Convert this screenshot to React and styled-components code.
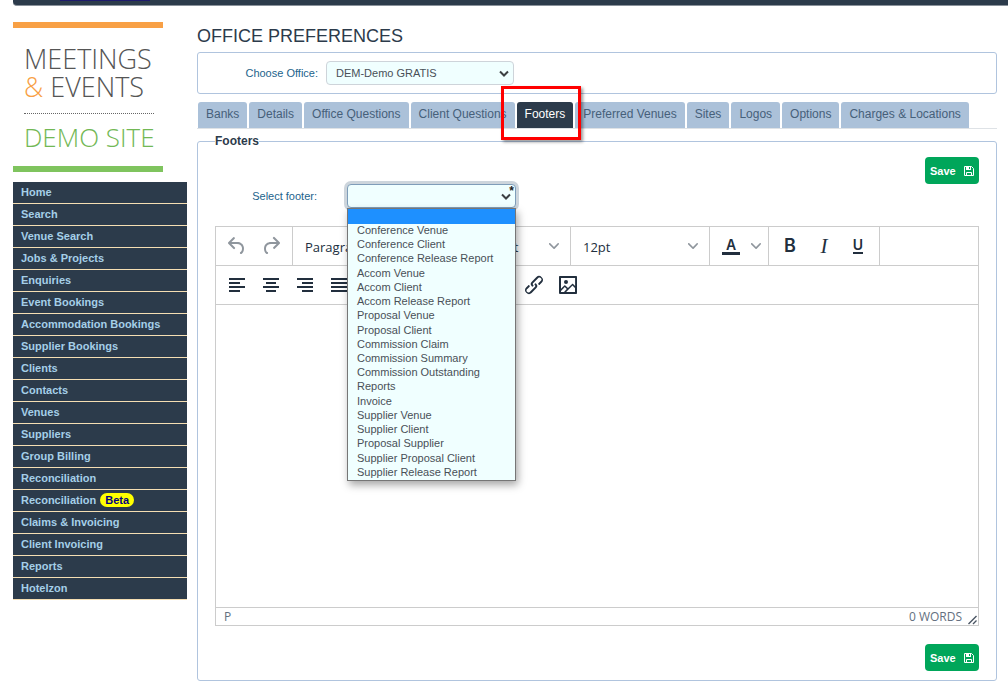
import React from "react";
import styled, { createGlobalStyle } from "styled-components";

const navy = "#2c3b4b";
const steel = "#b0c4de";
const editorLine = "#cccccc";
const editorInk = "#222f3e";

const GlobalStyle = createGlobalStyle`
    * {
        box-sizing: border-box;
    }
    body {
        margin: 0;
        background-color: #fff;
        color: ${navy};
        font-family: "Liberation Sans", Arial, sans-serif;
        font-size: 11px;
    }
    button, select, textarea {
        font-family: inherit;
    }
`

const TopBar = styled.header`
    height: 6px;
    margin-left: 13px;
    padding-left: 47px;
    background-color: ${navy};
    border-bottom: 1px solid #8a929b;
    border-bottom-left-radius: 4px;
`

const TopBarLine = styled.div`
    width: 90px;
    height: 1px;
    background-color: #1d1a6b;
`

const Page = styled.div`
    display: flex;
    align-items: flex-start;
    gap: 10px;
    padding: 16px 11px 12px 13px;
`

const SideBar = styled.aside`
    flex: 0 0 174px;
`

const LogoCamp = styled.div`
    display: flex;
    flex-direction: column;
    width: 150px;
    height: 150px;
    padding: 17px 9px 0 11px;
    margin-bottom: 10px;
    border-top: 6px solid #f8a045;
    border-bottom: 6px solid #7fc45e;
    font-family: "Open Sans", sans-serif;
    font-size: 27px;
    font-weight: 300;
    line-height: 28px;
    color: #555;
    white-space: nowrap;
`

const Ampersand = styled.span`
    color: #f8a045;
`

const LogoSite = styled.div`
    margin-top: 12px;
    padding-top: 9px;
    border-top: 1px dotted #666;
    font-size: 26px;
    color: #72b855;
`

const Menu = styled.nav`
    display: flex;
    flex-direction: column;
`

const MenuLink = styled.a`
    display: flex;
    align-items: center;
    gap: 4px;
    height: 22px;
    padding: 0 8px 1px;
    border-bottom: 1px solid #f5deb3;
    background-color: ${navy};
    color: #a5cfe8;
    font-weight: bold;
    text-decoration: none;
`

const Beta = styled.span`
    padding: 0 5px;
    border-radius: 7px;
    background-color: #ff0;
    color: #000080;
    line-height: 14px;
`

const Main = styled.main`
    flex: 1;
    min-width: 0;
`

const Title = styled.h1`
    margin: 4px 0 5px;
    font-size: 18px;
    font-weight: normal;
    line-height: 21px;
`

const OfficeBox = styled.div`
    display: flex;
    align-items: center;
    gap: 8px;
    height: 42px;
    border: 1px solid ${steel};
    border-radius: 3px;
`

const Label = styled.label`
    width: ${(props) => props.$width}px;
    color: #22638c;
    text-align: right;
`

const SelectCamp = styled.div`
    position: relative;
    width: ${(props) => props.$width}px;
`

const Select = styled.select`
    display: block;
    appearance: none;
    width: 100%;
    height: 24px;
    padding: 0 9px;
    border: 1px solid ${(props) => (props.$open ? "#7f9db9" : "#ced4da")};
    border-radius: 4px;
    outline: none;
    background-color: #f0ffff;
    box-shadow: ${(props) => (props.$open ? "0 0 0 3px #cdd5dc" : "none")};
    color: #495057;
    font-size: 11px;
`

const SelectArrow = styled.svg`
    position: absolute;
    right: 5px;
    top: 9px;
    pointer-events: none;
`

const Required = styled.span`
    position: absolute;
    right: 2px;
    top: 1px;
    color: #222;
    font-size: 12px;
    font-weight: bold;
    line-height: 12px;
`

const Options = styled.ul`
    position: absolute;
    z-index: 2;
    top: 24px;
    left: 0;
    right: 0;
    display: grid;
    grid-template-rows: 15px repeat(18, 1fr);
    height: 273px;
    margin: 0;
    padding: 0;
    border: 1px solid #767676;
    background-color: #f0ffff;
    box-shadow: 2px 4px 8px rgba(0, 0, 0, 0.35);
    color: #495057;
    list-style: none;
`

const Option = styled.li`
    padding-left: 9px;
    line-height: 12px;
    background-color: ${(props) => (props.$active ? "#1e90ff" : "transparent")};
`

const Tabs = styled.div`
    display: flex;
    gap: 2px;
    margin-top: 8px;
    padding-left: 1px;
    border-bottom: 1px solid #dee2e6;
`

const Tab = styled.button`
    position: relative;
    height: 26px;
    padding: 0 8px 2px;
    border: 0;
    border-radius: 3px 3px 0 0;
    background-color: ${(props) => (props.$active ? navy : "#abc1d9")};
    color: ${(props) => (props.$active ? "#fff" : "#46607a")};
    font-size: 12px;
    white-space: nowrap;
`

const Highlight = styled.span`
    position: absolute;
    z-index: 1;
    inset: -16px -8px -12px -16px;
    border: 3px solid #f00;
    box-shadow: 2px 2px 3px rgba(0, 0, 0, 0.4);
`

const Panel = styled.fieldset`
    min-width: 0;
    margin: 4px 0 0;
    padding: 8px 17px 9px;
    border: 1px solid ${steel};
    border-radius: 3px;
`

const PanelTitle = styled.legend`
    padding: 0;
    font-size: 12px;
    font-weight: bold;
    line-height: 16px;
`

const ButtonRow = styled.div`
    display: flex;
    justify-content: flex-end;
`

const SaveButton = styled.button`
    display: flex;
    align-items: center;
    justify-content: space-between;
    width: 54px;
    height: 27px;
    padding: 0 5px;
    border: 0;
    border-radius: 4px;
    background-color: #00a65a;
    color: #fff;
    font-size: 11px;
    font-weight: bold;
`

const FooterRow = styled.div`
    display: flex;
    align-items: center;
    gap: 30px;
    margin-bottom: 18px;
`

const Editor = styled.div`
    margin-bottom: 18px;
    border: 1px solid ${editorLine};
    color: ${editorInk};
    font-family: "Open Sans", "Noto Sans", sans-serif;
`

const ToolRow = styled.div`
    display: flex;
    height: 39px;
    border-bottom: 1px solid ${editorLine};
`

const ToolGroup = styled.div`
    display: flex;
    align-items: center;
    padding: 0 ${(props) => (props.$picker ? 8 : 4)}px 0 4px;
    width: ${(props) => (props.$width ? `${props.$width}px` : "auto")};
    border-right: 1px solid ${(props) => (props.$last ? "transparent" : editorLine)};
`

const ToolButton = styled.button`
    display: flex;
    align-items: center;
    justify-content: center;
    width: ${(props) => (props.$narrow ? 16 : 34)}px;
    height: 34px;
    padding: 0;
    border: 0;
    background: none;
    color: ${editorInk};
    opacity: ${(props) => (props.$faded ? 0.5 : 1)};
`

const ToolSelect = styled.select`
    appearance: none;
    flex: 1;
    min-width: 0;
    height: 34px;
    padding: 1px 8px 0;
    border: 0;
    background: none;
    color: ${editorInk};
    font-size: 13px;
`

const Letter = styled.span`
    font-family: ${(props) => (props.$italic ? '"Liberation Serif", serif' : 'Inter, sans-serif')};
    font-size: ${(props) => props.$size}px;
    font-style: ${(props) => (props.$italic ? "italic" : "normal")};
    font-weight: ${(props) => (props.$italic ? "normal" : "600")};
    line-height: ${(props) => (props.$line ? "14px" : "20px")};
    padding: 0 ${(props) => (props.$line === 3 ? 4 : 0)}px;
    border-bottom: ${(props) => props.$line || 0}px solid ${editorInk};
`

const TextArea = styled.textarea`
    display: block;
    width: 100%;
    height: 302px;
    padding: 10px;
    border: 0;
    resize: none;
    outline: none;
`

const StatusBar = styled.div`
    display: flex;
    align-items: flex-end;
    height: 18px;
    padding: 0 1px 0 8px;
    border-top: 1px solid ${editorLine};
    color: #647080;
    font-size: 12px;
    line-height: 17px;
`

const WordCount = styled.span`
    margin-left: auto;
    margin-right: 6px;
`

const Icon = ({ path }) => (
    <svg width="24" height="24" viewBox="0 0 24 24" fill="currentColor" fillRule="evenodd">
        <path d={path} />
    </svg>
);

const Chevron = () => (
    <svg width="10" height="10" viewBox="0 0 10 10" fill={editorInk} opacity="0.5">
        <path d="M8.7 2.2c.3-.3.8-.3 1 0 .4.4.4.9 0 1.2L5.7 7.8c-.3.3-.9.3-1.2 0L.2 3.4a.8.8 0 0 1 0-1.2c.3-.3.8-.3 1.1 0L5 6l3.7-3.8z" />
    </svg>
);

const Arrow = () => (
    <SelectArrow width="10" height="8" viewBox="0 0 10 8" fill="none" stroke="#3c4043" strokeWidth="2">
        <path d="M1 1.5 5 5.5 9 1.5" />
    </SelectArrow>
);

const icons = {
    undo: "M6.4 8H12c3.7 0 6.2 2 6.8 5.1.6 2.7-.4 5.6-2.3 6.8a1 1 0 0 1-1-1.8c1.1-.6 1.8-2.7 1.4-4.6-.5-2.1-2.1-3.5-4.9-3.5H6.4l3.3 3.3a1 1 0 1 1-1.4 1.4l-5-5a1 1 0 0 1 0-1.4l5-5a1 1 0 0 1 1.4 1.4L6.4 8z",
    redo: "M17.6 10H12c-2.8 0-4.4 1.4-4.9 3.5-.4 2 .3 4 1.4 4.6a1 1 0 1 1-1 1.8c-2-1.2-2.9-4.1-2.3-6.8.6-3 3-5.1 6.8-5.1h5.6l-3.3-3.3a1 1 0 1 1 1.4-1.4l5 5a1 1 0 0 1 0 1.4l-5 5a1 1 0 0 1-1.4-1.4l3.3-3.3z",
    left: "M4 5h16v2H4zM4 9h11v2H4zM4 13h16v2H4zM4 17h11v2H4z",
    center: "M4 5h16v2H4zM7 9h10v2H7zM4 13h16v2H4zM7 17h10v2H7z",
    right: "M4 5h16v2H4zM9 9h11v2H9zM4 13h16v2H4zM9 17h11v2H9z",
    justify: "M4 5h16v2H4zM4 9h16v2H4zM4 13h16v2H4zM4 17h16v2H4z",
    link: "M6.2 12.3a1 1 0 0 1 1.4 1.4l-2 2a2 2 0 1 0 2.6 2.8l4.8-4.8a1 1 0 0 0 0-1.4 1 1 0 1 1 1.4-1.3 2.9 2.9 0 0 1 0 4L9.6 20a3.9 3.9 0 0 1-5.5-5.5l2-2zm11.6-.6a1 1 0 0 1-1.4-1.4l2-2a2 2 0 1 0-2.6-2.8L11 10.3a1 1 0 0 0 0 1.4A1 1 0 1 1 9.6 13a2.9 2.9 0 0 1 0-4L14.4 4a3.9 3.9 0 0 1 5.5 5.5l-2 2z",
    image: "m5 15.7 3.3-3.2c.3-.3.7-.3 1 0L12 15l4.1-4c.3-.4.8-.4 1 0l2 1.9V5H5v10.7zM5 18V19h3l2.8-2.9-2-2L5 17.9zm14-3-2.5-2.4-6.4 6.5H19v-4zM4 3h16c.6 0 1 .4 1 1v16c0 .6-.4 1-1 1H4a1 1 0 0 1-1-1V4c0-.6.4-1 1-1zm6 8a2 2 0 1 0 0-4 2 2 0 0 0 0 4z",
};

const menu = [
    "Home", "Search", "Venue Search", "Jobs & Projects", "Enquiries", "Event Bookings",
    "Accommodation Bookings", "Supplier Bookings", "Clients", "Contacts", "Venues", "Suppliers",
    "Group Billing", "Reconciliation", "Reconciliation Beta", "Claims & Invoicing",
    "Client Invoicing", "Reports", "Hotelzon",
];

const tabs = [
    "Banks", "Details", "Office Questions", "Client Questions", "Footers",
    "Preferred Venues", "Sites", "Logos", "Options", "Charges & Locations",
];

const footers = [
    "Conference Venue", "Conference Client", "Conference Release Report", "Accom Venue",
    "Accom Client", "Accom Release Report", "Proposal Venue", "Proposal Client",
    "Commission Claim", "Commission Summary", "Commission Outstanding", "Reports", "Invoice",
    "Supplier Venue", "Supplier Client", "Proposal Supplier", "Supplier Proposal Client",
    "Supplier Release Report",
];

const Save = () => (
    <ButtonRow>
        <SaveButton type="button">
            Save
            <svg width="10" height="10" viewBox="0 0 10 10" fill="none" stroke="#fff">
                <path d="M.5.5H7.5L9.5 2.5V9.5H.5zM2.5 9.5V6.5H7.5V9.5" />
                <path d="M2 0h5v4H2z" fill="#fff" stroke="none" />
                <path d="M5 1h1v2H5z" fill="#00a65a" stroke="none" />
            </svg>
        </SaveButton>
    </ButtonRow>
);

const Tool = ({ name, faded }) => (
    <ToolButton type="button" aria-label={name} $faded={faded}>
        <Icon path={icons[name]} />
    </ToolButton>
);

const ToolPicker = ({ label, value }) => (
    <ToolGroup $width={139} $picker>
        <ToolSelect aria-label={label}>
            <option>{value}</option>
        </ToolSelect>
        <ToolButton as="span" $narrow>
            <Chevron />
        </ToolButton>
    </ToolGroup>
);

const App = () => {
    return (
        <>
            <GlobalStyle />
            <TopBar>
                <TopBarLine />
            </TopBar>
            <Page>
                <SideBar>
                    <LogoCamp>
                        <div>MEETINGS</div>
                        <div><Ampersand>&amp;</Ampersand> EVENTS</div>
                        <LogoSite>DEMO SITE</LogoSite>
                    </LogoCamp>
                    <Menu>
                        {menu.map((item) => (
                            <MenuLink href="#" key={item}>
                                {item.replace(" Beta", "")}
                                {item.endsWith("Beta") && <Beta>Beta</Beta>}
                            </MenuLink>
                        ))}
                    </Menu>
                </SideBar>
                <Main>
                    <Title>OFFICE PREFERENCES</Title>
                    <OfficeBox>
                        <Label htmlFor="office" $width={120}>Choose Office:</Label>
                        <SelectCamp $width={188}>
                            <Select id="office">
                                <option>DEM-Demo GRATIS</option>
                            </Select>
                            <Arrow />
                        </SelectCamp>
                    </OfficeBox>
                    <Tabs role="tablist">
                        {tabs.map((tab) => (
                            <Tab type="button" role="tab" key={tab} $active={tab === "Footers"}>
                                {tab}
                                {tab === "Footers" && <Highlight />}
                            </Tab>
                        ))}
                    </Tabs>
                    <Panel>
                        <PanelTitle>Footers</PanelTitle>
                        <Save />
                        <FooterRow>
                            <Label htmlFor="footer" $width={102}>Select footer:</Label>
                            <SelectCamp $width={169}>
                                <Select id="footer" $open>
                                    <option></option>
                                </Select>
                                <Arrow />
                                <Required>*</Required>
                                <Options role="listbox" aria-label="Select footer">
                                    <Option role="option" aria-label="None" $active />
                                    {footers.map((footer) => (
                                        <Option role="option" key={footer}>{footer}</Option>
                                    ))}
                                </Options>
                            </SelectCamp>
                        </FooterRow>
                        <Editor>
                            <ToolRow>
                                <ToolGroup>
                                    <Tool name="undo" faded />
                                    <Tool name="redo" faded />
                                </ToolGroup>
                                <ToolPicker label="Block" value="Paragraph" />
                                <ToolPicker label="Font" value="System Font" />
                                <ToolPicker label="Font size" value="12pt" />
                                <ToolGroup>
                                    <ToolButton type="button">
                                        <Letter $size={14} $line={3}>A</Letter>
                                    </ToolButton>
                                    <ToolButton type="button" aria-label="Text colours" $narrow>
                                        <Chevron />
                                    </ToolButton>
                                </ToolGroup>
                                <ToolGroup>
                                    <ToolButton type="button"><Letter $size={18}>B</Letter></ToolButton>
                                    <ToolButton type="button"><Letter $size={21} $italic>I</Letter></ToolButton>
                                    <ToolButton type="button"><Letter $size={14} $line={2}>U</Letter></ToolButton>
                                </ToolGroup>
                            </ToolRow>
                            <ToolRow>
                                <ToolGroup>
                                    <Tool name="left" />
                                    <Tool name="center" />
                                    <Tool name="right" />
                                    <Tool name="justify" />
                                </ToolGroup>
                                <ToolGroup $width={152} />
                                <ToolGroup $last>
                                    <Tool name="link" />
                                    <Tool name="image" />
                                </ToolGroup>
                            </ToolRow>
                            <TextArea aria-label="Footer text" />
                            <StatusBar>
                                P
                                <WordCount>0 WORDS</WordCount>
                                <svg width="9" height="10" viewBox="0 0 9 10" stroke="#4a5563" strokeWidth="1.4">
                                    <path d="M.5 9 8.5 1M5 9 8.5 5.5" />
                                </svg>
                            </StatusBar>
                        </Editor>
                        <Save />
                    </Panel>
                </Main>
            </Page>
        </>
    );
};

export default App;
